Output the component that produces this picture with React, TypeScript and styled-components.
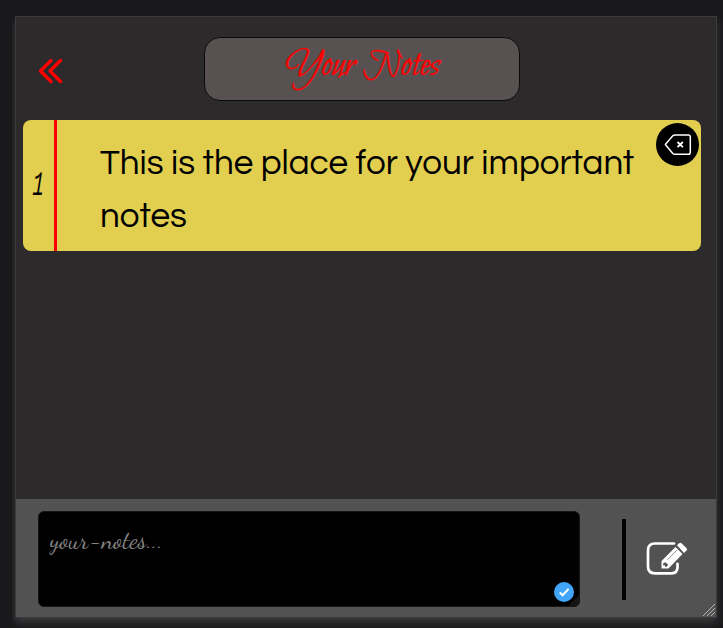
import React from "react";
import styled, { createGlobalStyle } from "styled-components";

const GlobalStyle = createGlobalStyle`
  * { box-sizing: border-box; }
  html, body { margin: 0; }
  body { background: #19191b; overflow: hidden; }
  svg { display: block; flex: none; }
`;

const Page = styled.div`
  height: 628px;
  padding: 16px 6px 10px 15px;
`;

const Panel = styled.main`
  position: relative;
  display: flex;
  flex-direction: column;
  height: 602px;
  border: 1px solid #3b3a3d;
  background: #2d2a2b;
  box-shadow: 0 5px 8px #39393b;
  clip-path: inset(0 -6px -10px -3px);
`;

const Header = styled.header`
  display: grid;
  grid-template-columns: 188px 316px;
  align-items: center;
  height: 103px;
`;

const BackButton = styled.button`
  width: 28px;
  height: 28px;
  margin: 4px 0 0 20px;
  padding: 0;
  border: 0;
  background: none;
`;

const Title = styled.h1`
  display: flex;
  justify-content: center;
  height: 64px;
  margin: 1px 0 0;
  border: 1px solid #0b0a0a;
  border-radius: 16px;
  background: #575251;
  color: #ff0000;
  font: 400 39px/58px "Bilbo Swash Caps", "Dancing Script", "Liberation Serif", cursive;
`;

const TitleText = styled.span`
  -webkit-text-stroke: 0.4px #ff0000;
`;

const Notes = styled.section`
  flex: 1;
  padding: 0 15px 0 7px;
`;

const Note = styled.article`
  position: relative;
  display: flex;
  height: 131px;
  border-radius: 8px;
  background: #e2ce4f;
  color: #000;
`;

const NoteNumber = styled.div`
  display: flex;
  align-items: center;
  justify-content: center;
  width: 34px;
  border-right: 3px solid #ff0000;
  font: italic 400 34px/40px "Liberation Mono", monospace;
`;

const Digit = styled.span`
  transform: scaleX(0.55) skewX(-5deg);
`;

const NoteText = styled.p`
  margin: 17px 0 0;
  padding-left: 43px;
  font: 400 35px/53px Questrial, Inter, sans-serif;
  white-space: nowrap;
`;

const DeleteButton = styled.button`
  position: absolute;
  top: 3px;
  right: 2px;
  width: 43px;
  height: 43px;
  padding: 0;
  border: 0;
  border-radius: 50%;
  background: #000;
`;

const Composer = styled.footer`
  display: flex;
  height: 118px;
  padding: 12px 0 0 22px;
  background: #525252;
`;

const Field = styled.div`
  position: relative;
  width: 542px;
  height: 96px;
  padding: 12px 11px;
  border: 1px solid #161616;
  border-radius: 6px;
  background: #000;
  color: #858585;
  font: 400 25px/32px "Dancing Script", "Liberation Serif", cursive;
`;

const CheckBadge = styled.div`
  position: absolute;
  right: 5px;
  bottom: 4px;
`;

const FieldGrip = styled.div`
  position: absolute;
  right: 0;
  bottom: 0;
`;

const Divider = styled.div`
  width: 4px;
  height: 81px;
  margin: 8px 20px 0 42px;
  background: #000;
`;

const EditButton = styled.button`
  width: 42px;
  height: 34px;
  margin-top: 30px;
  padding: 0;
  border: 0;
  background: none;
`;

const PanelGrip = styled.div`
  position: absolute;
  right: 0;
  bottom: 0;
`;

export default function App() {
  return (
    <>
      <GlobalStyle />
      <Page>
        <Panel>
          <Header>
            <BackButton aria-label="Back">
              <svg width="28" height="28" fill="none" stroke="#f00" strokeWidth="3.4" strokeLinecap="round" strokeLinejoin="round">
                <path d="M15 3.5 4.5 14 15 24.5M24.5 3.5 14 14l10.5 10.5" />
              </svg>
            </BackButton>
            <Title><TitleText>Your Notes</TitleText></Title>
          </Header>
          <Notes>
            <Note>
              <NoteNumber><Digit>1</Digit></NoteNumber>
              <NoteText>This is the place for your important<br />notes</NoteText>
              <DeleteButton aria-label="Delete note">
                <svg width="43" height="43" fill="none" stroke="#fff">
                  <path strokeWidth="1.5" strokeLinejoin="round" d="M9.3 21.5 16.6 13c.8-.9 1.3-1.1 2.4-1.1h13.2c1.5 0 2.1.6 2.1 2.1v15.2c0 1.5-.6 2.1-2.1 2.1H19c-1.1 0-1.6-.2-2.4-1.1Z" />
                  <path strokeWidth="1.8" d="m21.5 19 5.4 5.2m0-5.2-5.4 5.2" />
                </svg>
              </DeleteButton>
            </Note>
          </Notes>
          <Composer>
            <Field>
              your-notes...
              <FieldGrip>
                <svg width="11" height="11"><path d="M11 0v6a5 5 0 0 1-5 5H0Z" fill="#151515" /></svg>
              </FieldGrip>
              <CheckBadge>
                <svg width="20" height="20" fill="none">
                  <circle cx="10" cy="10" r="10" fill="#42a5f8" />
                  <path d="m5.8 10.4 2.8 2.8 6-6.3" stroke="#fff" strokeWidth="2.1" />
                </svg>
              </CheckBadge>
            </Field>
            <Divider />
            <EditButton aria-label="Edit">
              <svg width="42" height="34" fill="none">
                <path d="M28 2.5H9Q2 2.5 2 9.5v16Q2 32.3 9 32.3h16.5q6 0 6-6v-3.5" stroke="#fff" strokeWidth="2.7" strokeLinecap="round" />
                <path d="M15.5 20 29.5 6l7 7-14 14.5h-7Z" fill="#fff" />
                <path d="m31 4.3 2.1-2.1q1.2-1 2.4 0l5 4.8q1 1.3 0 2.5l-2.5 2.5Z" fill="#fff" />
                <path d="M21.5 18.7 31 9.2" stroke="#888" strokeWidth="1" />
                <path d="m17 22.8 2.2-1.5 3 2.5-1.6 2h-1.6v-1.6h-2Z" fill="#525252" />
              </svg>
            </EditButton>
          </Composer>
          <PanelGrip>
            <svg width="14" height="14" stroke="#b5b5b5" strokeWidth="1">
              <path d="M1 13 13 1M5 13l8-8M9 13l4-4" />
            </svg>
          </PanelGrip>
        </Panel>
      </Page>
    </>
  );
}
